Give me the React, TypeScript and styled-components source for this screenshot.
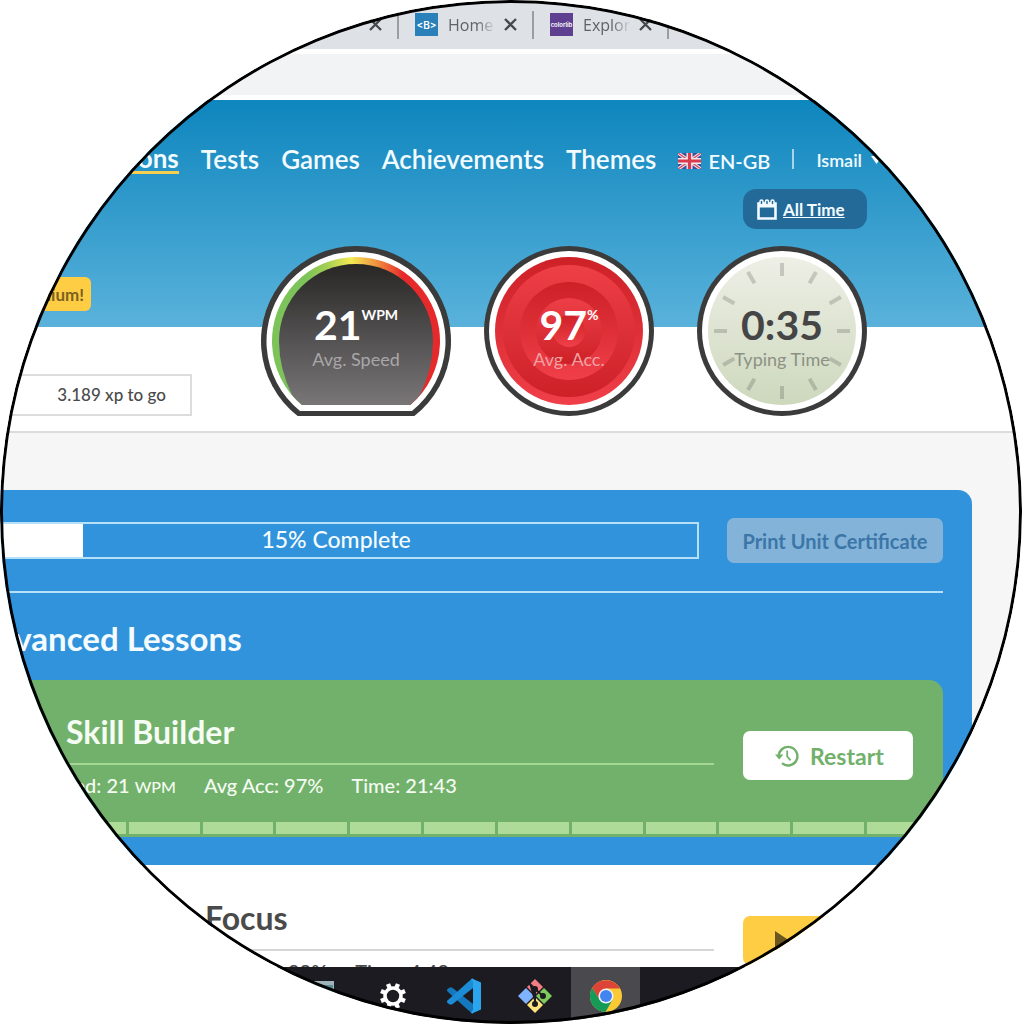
import React from "react";
import styled, { createGlobalStyle } from "styled-components";

const ui = '"Lato", "Open Sans", sans-serif';

const GlobalStyle = createGlobalStyle`
  *, *::before, *::after { box-sizing: border-box; }
  body { margin: 0; background: #fff; font-family: ${ui}; color: #4a4a4a; }
  h2, h3, p { margin: 0; }
  a { color: inherit; text-decoration: none; }
  button { font: inherit; border: 0; padding: 0; cursor: pointer; }
  svg { display: block; flex: none; }
`;

const Lens = styled.div`
  position: relative;
  display: flex;
  flex-direction: column;
  width: 100%;
  aspect-ratio: 1022 / 1024;
  border-radius: 50%;
  overflow: hidden;
  background: #fff;
  &::after {
    content: "";
    position: absolute;
    inset: 0;
    border: 3px solid #000;
    border-radius: 50%;
    pointer-events: none;
  }
`;

/* Browser chrome */
const TabStrip = styled.div`
  flex: none;
  display: flex;
  align-items: center;
  height: 49px;
  padding-left: 264px;
  background: #dee1e6;
  font-family: "Open Sans", sans-serif;
  font-size: 16px;
  color: #5f6368;
`;

const Tab = styled.div`
  flex: none;
  display: flex;
  align-items: center;
  width: 135px;
  height: 28px;
  padding: 0 15px 0 16px;
  border-right: 2px solid #9b9da1;
`;

const TabTitle = styled.span`
  flex: 1;
  margin: 0 8px 0 10px;
  overflow: hidden;
  white-space: nowrap;
  mask-image: linear-gradient(90deg, #000 60%, transparent);
`;

const TabClose = styled.button`
  background: none;
  color: #45484c;
`;

const Favicon = styled.span<{ $bg: string }>`
  flex: none;
  display: grid;
  place-items: center;
  width: 23px;
  height: 23px;
  background: ${(p) => p.$bg};
  color: #fff;
  font-family: "Inter", sans-serif;
`;

const FavText = styled.span<{ $size: number }>`
  font-size: ${(p) => p.$size}px;
  font-weight: 600;
  line-height: 1;
`;

const AddressBar = styled.div`
  flex: none;
  height: 51px;
  border: solid #fff;
  border-width: 5px 0;
  background: #f1f3f4;
`;

/* Page */
const Page = styled.main`
  flex: 1;
  min-height: 0;
  overflow: hidden;
  background: #f6f6f6;
`;

const Shell = styled.div`
  margin: 0 50px 0 -56px;
`;

const Hero = styled.header`
  border-bottom: 2px solid #dcdcdc;
  background: linear-gradient(#0e86be, #5ab2db) top / 100% 227px no-repeat #fff;
`;

const HeroInner = styled(Shell)`
  display: flex;
  flex-direction: column;
  align-items: flex-end;
  padding: 39px 105px 15px 0;
`;

const Nav = styled.nav`
  display: flex;
  align-items: center;
  gap: 22px;
  height: 40px;
  margin-right: -15px;
  color: #f2fbff;
  font-size: 26px;
  line-height: 32px;
  white-space: nowrap;
`;

const NavLink = styled.a<{ $active?: boolean }>`
  font-weight: ${(p) => (p.$active ? 700 : 600)};
  ${(p) => p.$active && "line-height: 26px; border-bottom: 3px solid #f6cf52;"}
`;

const Language = styled.button`
  display: flex;
  align-items: center;
  gap: 7px;
  padding-top: 3px;
  background: none;
  color: inherit;
  font-size: 20px;
  font-weight: 600;
`;

const Rule = styled.span`
  width: 2px;
  height: 20px;
  background: #a9d5ea;
`;

const Account = styled.button`
  display: flex;
  align-items: center;
  gap: 9px;
  padding-top: 2px;
  background: none;
  color: inherit;
  font-size: 18px;
  font-weight: 600;
`;

const Period = styled.button`
  display: flex;
  align-items: center;
  gap: 6px;
  width: 124px;
  height: 40px;
  margin-top: 10px;
  padding-left: 14px;
  border-radius: 13px;
  background: #236a99;
  color: #f2fbff;
  font-size: 17px;
  font-weight: 700;
  text-decoration: underline;
`;

const Summary = styled.div`
  display: flex;
  align-self: stretch;
  justify-content: space-between;
  align-items: flex-end;
  margin-top: 17px;
`;

const Progress = styled.div`
  display: flex;
  flex-direction: column;
  align-items: flex-start;
  gap: 63px;
`;

const Premium = styled.button`
  width: 147px;
  height: 34px;
  padding-right: 7px;
  border-radius: 6px;
  background: #ffcd44;
  color: #7a6220;
  font-size: 17px;
  font-weight: 700;
  text-align: right;
`;

const XpBox = styled.div`
  width: 248px;
  padding: 0 24px;
  border: 2px solid #dcdcdc;
  background: #fff;
  font-size: 17px;
  font-weight: 500;
  line-height: 38px;
  text-align: right;
`;

const Gauges = styled.div`
  display: flex;
`;

const Gauge = styled.div<{ $after?: number }>`
  display: grid;
  margin-right: ${(p) => p.$after ?? 0}px;
  & > * { grid-area: 1 / 1; }
`;

const Reading = styled.div<{ $color: string; $label: string }>`
  padding-top: 54px;
  color: ${(p) => p.$color};
  text-align: center;
  & p { color: ${(p) => p.$label}; font-size: 18px; line-height: 20px; }
`;

const Figure = styled.div`
  display: flex;
  justify-content: center;
  font-size: 41px;
  font-weight: 700;
  line-height: 49px;
  & small { font-size: 14px; line-height: 30px; }
`;

/* Unit panels */
const Unit = styled.section`
  margin-top: 57px;
  padding: 28px 29px;
  border-radius: 14px 14px 0 0;
  background: #3193db;
  color: #f5fcff;
`;

const UnitTop = styled.div`
  display: flex;
  align-items: center;
  gap: 28px;
  padding-bottom: 28px;
  border-bottom: 2px solid #b5e0f7;
`;

const Meter = styled.div<{ $done: number }>`
  flex: 1;
  height: 37px;
  border: 2px solid #b5e0f7;
  background: linear-gradient(#fff, #fff) left / ${(p) => p.$done}% 100% no-repeat;
  font-size: 23px;
  font-weight: 500;
  line-height: 31px;
  text-align: center;
`;

const Certificate = styled.button`
  width: 216px;
  height: 45px;
  border-radius: 7px;
  background: #83b3d9;
  color: #3c76a8;
  font-size: 20px;
  font-weight: 700;
`;

const UnitTitle = styled.h2`
  padding: 25px 0 22px;
  font-size: 33px;
  font-weight: 700;
  line-height: 40px;
`;

const Lesson = styled.article<{ $done?: boolean }>`
  border-radius: ${(p) => (p.$done ? "14px 14px 0 0" : "0")};
  background: ${(p) => (p.$done ? "#72b16b" : "#fff")};
  color: ${(p) => (p.$done ? "#f5fcf3" : "#4a4a4a")};
`;

const LessonBody = styled.div`
  display: flex;
  align-items: center;
  gap: 29px;
  height: 142px;
  padding: 9px 30px 0 60px;
`;

const LessonInfo = styled.div`
  flex: 1;
`;

const LessonTitle = styled.h3<{ $indent: number; $line: string }>`
  padding: 1px 0 11px ${(p) => p.$indent}px;
  border-bottom: 2px solid ${(p) => p.$line};
  font-size: 32px;
  font-weight: 700;
  line-height: 40px;
`;

const Stats = styled.div<{ $indent: number }>`
  display: flex;
  gap: 28px;
  padding: 6px 0 0 ${(p) => p.$indent}px;
  font-size: 20px;
  font-weight: 500;
  line-height: 28px;
  & small { font-size: 16px; }
`;

const Action = styled.button<{ $bg: string; $fg: string }>`
  display: flex;
  align-items: center;
  gap: 11px;
  width: 170px;
  height: 49px;
  padding-left: 32px;
  border-radius: 7px;
  background: ${(p) => p.$bg};
  color: ${(p) => p.$fg};
  font-size: 23px;
  font-weight: 700;
`;

const Steps = styled.div`
  display: flex;
  gap: 3px;
  padding: 0 5px 3px 8px;
`;

const Step = styled.span`
  flex: 1;
  height: 12px;
  background: #afdb99;
`;

const NextUnit = styled.section`
  padding: 0 29px;
  background: #fff;
`;

/* Taskbar */
const Taskbar = styled.footer`
  flex: none;
  display: flex;
  gap: 2px;
  height: 57px;
  padding-left: 287px;
  background: #1c1b21;
`;

const TaskButton = styled.button<{ $open?: boolean }>`
  display: grid;
  place-items: center;
  width: 69px;
  background: ${(p) => (p.$open ? "#4a4a4e" : "none")};
`;

const Cross = () => (
  <svg width="13" height="13" viewBox="0 0 13 13" stroke="currentColor" strokeWidth="2.3">
    <path d="M1 1L12 12M12 1L1 12" />
  </svg>
);

const Flag = () => (
  <svg width="23" height="16" viewBox="0 0 23 16">
    <path fill="#3d4f97" d="M0 0H23V16H0Z" />
    <path stroke="#efdfe8" strokeWidth="3.4" d="M0 0L23 16M23 0L0 16" />
    <path stroke="#d8485c" strokeWidth="1.2" d="M0 0L23 16M23 0L0 16" />
    <path stroke="#f4e8ee" strokeWidth="6" d="M11.5 0V16M0 8H23" />
    <path stroke="#d93a4c" strokeWidth="3.2" d="M11.5 0V16M0 8H23" />
  </svg>
);

const Calendar = () => (
  <svg width="20" height="21" viewBox="0 0 20 21" fill="none" stroke="#f2fbff">
    <path strokeWidth="2.6" d="M1.5 4.5H18.5V19.5H1.5Z" />
    <path strokeWidth="4" d="M1 6.5H19" />
    <g strokeWidth="1.5" fill="#236a99">
      <rect x="3" y="1" width="3" height="5" rx="1.5" />
      <rect x="8.5" y="1" width="3" height="5" rx="1.5" />
      <rect x="14" y="1" width="3" height="5" rx="1.5" />
    </g>
  </svg>
);

const History = () => (
  <svg width="24" height="24" viewBox="0 0 24 24" fill="none" stroke="currentColor">
    <path strokeWidth="2.4" d="M3.8 12.5A9.3 9.3 0 1 1 7 19.2" />
    <path fill="currentColor" stroke="none" d="M0 10.5H8.4L4.2 15.6Z" />
    <path strokeWidth="1.8" d="M12.2 6.5V12.5L15.6 16.4" />
  </svg>
);

const Play = () => (
  <svg width="16" height="20" viewBox="0 0 16 20">
    <path fill="currentColor" d="M0 0L15 10L0 20Z" />
  </svg>
);

const SpeedDial = () => (
  <svg width="190" height="170" viewBox="0 0 190 170">
    <defs>
      <linearGradient id="spectrum">
        <stop offset="0.2" stopColor="#7cc35a" />
        <stop offset="0.33" stopColor="#a5cf54" />
        <stop offset="0.47" stopColor="#f3ea52" />
        <stop offset="0.62" stopColor="#f0923f" />
        <stop offset="0.78" stopColor="#e62a2b" />
      </linearGradient>
      <linearGradient id="slate" x2="0" y2="1">
        <stop offset="0" stopColor="#282725" />
        <stop offset="1" stopColor="#797678" />
      </linearGradient>
    </defs>
    <path fill="#3b3b3b" d="M36.7 170A95 95 0 1 1 153.3 170Z" />
    <path fill="#fff" d="M39 165A89.5 89.5 0 1 1 151 165Z" />
    <path fill="url(#spectrum)" d="M40.6 159A84 84 0 1 1 149.4 159Z" />
    <path
      fill="url(#slate)"
      d="M41 159A84 84 0 0 1 31 149Q18 122 18 95A77 77 0 0 1 172 95Q172 122 159 149A84 84 0 0 1 149 159Z"
    />
  </svg>
);

const AccuracyDial = () => (
  <svg width="170" height="170" viewBox="0 0 170 170">
    <defs>
      <linearGradient id="deep" x2="0" y2="1">
        <stop offset="0" stopColor="#cd2027" />
        <stop offset="1" stopColor="#f03f48" />
      </linearGradient>
      <linearGradient id="bright" x2="0" y2="1">
        <stop offset="0" stopColor="#ee3f47" />
        <stop offset="1" stopColor="#cd2027" />
      </linearGradient>
    </defs>
    <circle cx="85" cy="85" r="85" fill="#3b3b3b" />
    <circle cx="85" cy="85" r="80" fill="#fff" />
    <circle cx="85" cy="85" r="74" fill="url(#deep)" />
    <circle cx="85" cy="85" r="66" fill="url(#bright)" />
    <circle cx="85" cy="85" r="49" fill="url(#deep)" />
    <circle cx="85" cy="85" r="33" fill="url(#bright)" />
    <circle cx="85" cy="85" r="16" fill="url(#deep)" />
  </svg>
);

const TimeDial = () => (
  <svg width="170" height="170" viewBox="0 0 170 170">
    <defs>
      <linearGradient id="face" x2="0" y2="1">
        <stop offset="0" stopColor="#eeefe6" />
        <stop offset="1" stopColor="#cdd8bd" />
      </linearGradient>
    </defs>
    <circle cx="85" cy="85" r="85" fill="#3b3b3b" />
    <circle cx="85" cy="85" r="80" fill="#fff" />
    <circle cx="85" cy="85" r="74" fill="url(#face)" />
    {Array.from({ length: 12 }, (_, i) => (
      <path
        key={i}
        stroke="#000"
        strokeOpacity="0.16"
        strokeWidth="4"
        d="M85 17V30"
        transform={`rotate(${i * 30} 85 85)`}
      />
    ))}
  </svg>
);

const Picture = () => (
  <svg width="30" height="30" viewBox="0 0 30 30">
    <path fill="#9fb4ba" d="M3 0H27V26H3Z" />
    <path fill="#5b8f98" d="M3 4H26V26H3Z" />
  </svg>
);

const Gear = () => (
  <svg width="26" height="26" viewBox="0 0 26 26">
    <circle cx="13" cy="13" r="8" fill="none" stroke="#fff" strokeWidth="3.6" />
    {Array.from({ length: 8 }, (_, i) => (
      <path
        key={i}
        fill="#fff"
        d="M10.8 0H15.2V5H10.8Z"
        transform={`rotate(${i * 45 + 22.5} 13 13)`}
      />
    ))}
  </svg>
);

const CodeMark = () => (
  <svg width="36" height="36" viewBox="0 0 36 36">
    <path fill="#1478bd" d="M1 11.5L3.6 9.4L6 9.6L27 26V35.4L25.4 35L1.2 13.2Z" />
    <path fill="#1c8cd6" d="M1 24.5L3.6 26.6L6 26.4L27 10V0.6L25.4 1L1.2 22.8Z" />
    <path fill="#2aa5ee" d="M26 0.4L35 4.4V31.6L26 35.6L25 34.6L27 32V4L25 1.4Z" />
  </svg>
);

const GitMark = () => (
  <svg width="36" height="36" viewBox="0 0 36 36">
    <path fill="#f27d82" d="M18 1L26 9L18 17L10 9Z" />
    <path fill="#80b3ff" d="M9 10L17 18L9 26L1 18Z" />
    <path fill="#80c95c" d="M27 10L35 18L27 26L19 18Z" />
    <path fill="#fde47c" d="M18 19L26 27L18 35L10 27Z" />
    <g stroke="#1c1b21" strokeWidth="2" fill="#1c1b21">
      <path d="M12 5L18 11V26M18 11L26 18" />
      <circle cx="18" cy="11" r="2" />
      <circle cx="18" cy="26" r="2" />
      <circle cx="26" cy="18" r="2" />
    </g>
  </svg>
);

const ChromeMark = () => (
  <svg width="32" height="32" viewBox="0 0 32 32">
    <circle cx="16" cy="16" r="16" fill="#fbc934" />
    <path fill="#dc4437" d="M2.1 8A16 16 0 0 1 29.9 8.5H16L9 19Z" />
    <path fill="#159a57" d="M2.1 8A16 16 0 0 0 15.5 32L22.5 19.7L9.6 19.6Z" />
    <circle cx="16" cy="16" r="7.6" fill="#f1f1f1" />
    <circle cx="16" cy="16" r="6" fill="#4285f0" />
  </svg>
);

const links = ["Tests", "Games", "Achievements", "Themes"];

export default function App() {
  return (
    <Lens>
      <GlobalStyle />
      <TabStrip>
        <Tab>
          <TabTitle />
          <TabClose aria-label="Close tab"><Cross /></TabClose>
        </Tab>
        <Tab>
          <Favicon $bg="#2a80b8"><FavText $size={10}>&lt;B&gt;</FavText></Favicon>
          <TabTitle>Home</TabTitle>
          <TabClose aria-label="Close tab"><Cross /></TabClose>
        </Tab>
        <Tab>
          <Favicon $bg="#5f3f8f"><FavText $size={6}>colorlib</FavText></Favicon>
          <TabTitle>Explor</TabTitle>
          <TabClose aria-label="Close tab"><Cross /></TabClose>
        </Tab>
      </TabStrip>
      <AddressBar />
      <Page>
        <Hero>
          <HeroInner>
            <Nav>
              <NavLink href="#lessons" $active>Lessons</NavLink>
              {links.map((name) => (
                <NavLink key={name} href={`#${name.toLowerCase()}`}>{name}</NavLink>
              ))}
              <Language><Flag />EN-GB</Language>
              <Rule />
              <Account>
                Ismail
                <svg width="11" height="8" viewBox="0 0 11 8"><path fill="currentColor" d="M0 0H11L5.5 8Z" /></svg>
              </Account>
            </Nav>
            <Period><Calendar />All Time</Period>
            <Summary>
              <Progress>
                <Premium>Premium!</Premium>
                <XpBox>3.189 xp to go</XpBox>
              </Progress>
              <Gauges>
                <Gauge $after={33}>
                  <SpeedDial />
                  <Reading $color="#fff" $label="#a9a7a8">
                    <Figure>21<small>WPM</small></Figure>
                    <p>Avg. Speed</p>
                  </Reading>
                </Gauge>
                <Gauge $after={43}>
                  <AccuracyDial />
                  <Reading $color="#fff" $label="#f0a0a3">
                    <Figure>97<small>%</small></Figure>
                    <p>Avg. Acc.</p>
                  </Reading>
                </Gauge>
                <Gauge>
                  <TimeDial />
                  <Reading $color="#454545" $label="#8c9184">
                    <Figure>0:35</Figure>
                    <p>Typing Time</p>
                  </Reading>
                </Gauge>
              </Gauges>
            </Summary>
          </HeroInner>
        </Hero>
        <Shell>
          <Unit>
            <UnitTop>
              <Meter $done={15}>15% Complete</Meter>
              <Certificate>Print Unit Certificate</Certificate>
            </UnitTop>
            <UnitTitle>Advanced Lessons</UnitTitle>
            <Lesson $done>
              <LessonBody>
                <LessonInfo>
                  <LessonTitle $indent={33} $line="#a5d893">Skill Builder</LessonTitle>
                  <Stats $indent={9}>
                    <span>Speed: 21 <small>WPM</small></span>
                    <span>Avg Acc: 97%</span>
                    <span>Time: 21:43</span>
                  </Stats>
                </LessonInfo>
                <Action $bg="#fff" $fg="#72b16b"><History />Restart</Action>
              </LessonBody>
              <Steps>
                {Array.from({ length: 13 }, (_, i) => <Step key={i} />)}
              </Steps>
            </Lesson>
          </Unit>
          <NextUnit>
            <Lesson>
              <LessonBody>
                <LessonInfo>
                  <LessonTitle $indent={172} $line="#d6d6d6">Focus</LessonTitle>
                  <Stats $indent={255}>
                    <span>98%</span>
                    <span>Time: 4:49</span>
                  </Stats>
                </LessonInfo>
                <Action $bg="#ffcd44" $fg="#6b5520" aria-label="Start lesson"><Play /></Action>
              </LessonBody>
            </Lesson>
          </NextUnit>
        </Shell>
      </Page>
      <Taskbar>
        <TaskButton aria-label="Pictures"><Picture /></TaskButton>
        <TaskButton aria-label="Settings"><Gear /></TaskButton>
        <TaskButton aria-label="Code editor"><CodeMark /></TaskButton>
        <TaskButton aria-label="Git"><GitMark /></TaskButton>
        <TaskButton aria-label="Browser" $open><ChromeMark /></TaskButton>
      </Taskbar>
    </Lens>
  );
}
